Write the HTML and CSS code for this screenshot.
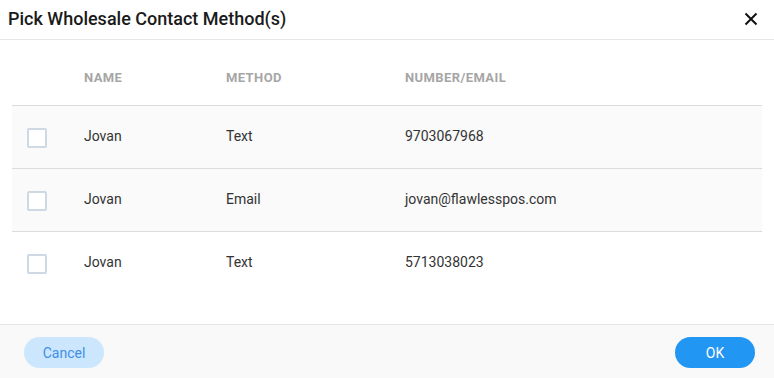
FILE: index.html
```html
<!DOCTYPE html>
<html>
<head>
<meta charset="utf-8">
<link rel="stylesheet" href="styles.css">
</head>
<body>
<div class="dialog">
  <div class="header">
    <div class="title">Pick Wholesale Contact Method(s)</div>
    <button class="close" aria-label="Close">
      <svg width="14" height="14" viewBox="0 0 14 14"><path d="M1.5 1.5 L12.5 12.5 M12.5 1.5 L1.5 12.5" stroke="#111" stroke-width="2" fill="none"/></svg>
    </button>
  </div>
  <div class="content">
    <table class="grid">
      <colgroup>
        <col class="c-check"><col class="c-name"><col class="c-method"><col>
      </colgroup>
      <thead>
        <tr><th></th><th>NAME</th><th>METHOD</th><th>NUMBER/EMAIL</th></tr>
      </thead>
      <tbody>
        <tr class="shaded"><td><span class="box"></span></td><td>Jovan</td><td>Text</td><td>9703067968</td></tr>
        <tr class="shaded"><td><span class="box"></span></td><td>Jovan</td><td>Email</td><td>jovan@flawlesspos.com</td></tr>
        <tr class="last"><td><span class="box"></span></td><td>Jovan</td><td>Text</td><td>5713038023</td></tr>
      </tbody>
    </table>
  </div>
  <div class="footer">
    <button class="btn cancel">Cancel</button>
    <button class="btn ok">OK</button>
  </div>
</div>
</body>
</html>
```
FILE: styles.css
```css
html, body {
  margin: 0;
  padding: 0;
  background: #fff;
  font-family: Roboto, "Liberation Sans", sans-serif;
}
.dialog {
  width: 774px;
  height: 378px;
  display: flex;
  flex-direction: column;
  background: #fff;
}
.header {
  height: 39px;
  border-bottom: 1px solid #e6e6e6;
  display: flex;
  align-items: center;
  justify-content: space-between;
  padding: 0 16px 0 8px;
}
.title {
  font-size: 18px;
  font-weight: 500;
  color: #1a1a1a;
  margin-top: -2px;
}
.close {
  border: 0;
  background: none;
  padding: 0;
  width: 14px;
  height: 14px;
  display: flex;
  margin-top: -2px;
}
.content {
  flex: 1;
  padding: 0 12px;
}
.grid {
  width: 750px;
  border-collapse: collapse;
  table-layout: fixed;
}
.c-check { width: 72px; }
.c-name { width: 142px; }
.c-method { width: 179px; }
.grid th {
  height: 65px;
  box-sizing: border-box;
  padding: 31px 0 20px;
  line-height: 14px;
  text-align: left;
  font-size: 13px;
  font-weight: 700;
  letter-spacing: 0.4px;
  color: #a6a6a6;
  border-bottom: 1px solid #dcdcdc;
  vertical-align: top;
}
.grid td {
  height: 60px;
  padding: 0 0 2px;
  font-size: 14px;
  color: #333;
  vertical-align: middle;
}
.grid tr.shaded td {
  background: #fafafa;
  border-bottom: 1px solid #dcdcdc;
}
.grid td:first-child {
  padding-left: 15px;
}
.box {
  display: block;
  width: 16px;
  height: 16px;
  border: 2px solid #ced9e5;
  border-radius: 2px;
  background: #fff;
  margin-top: 4px;
}
.footer {
  border-top: 1px solid #e6e6e6;
  background: #f9f9f9;
  display: flex;
  justify-content: space-between;
  align-items: flex-start;
  padding: 12px 19px 0 24px;
  box-sizing: border-box;
  height: 54px;
}
.btn {
  width: 80px;
  height: 31px;
  border: 0;
  border-radius: 16px;
  font-family: Roboto, "Liberation Sans", sans-serif;
  font-size: 14px;
  padding: 0;
}
.cancel {
  background: #cce6fd;
  color: #3d8fe6;
}
.ok {
  background: #2196f3;
  color: #fff;
}
```
